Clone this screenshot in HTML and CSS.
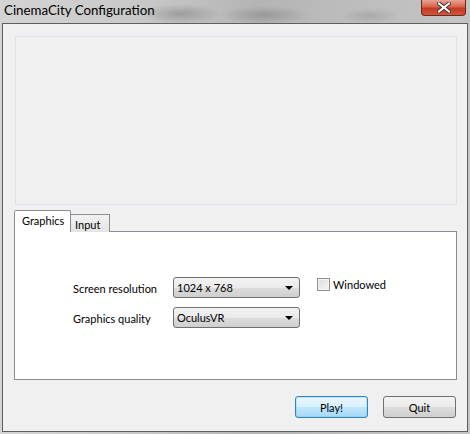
FILE: index.html
```html
<!DOCTYPE html>
<html>
<head>
<meta charset="utf-8">
<link rel="stylesheet" href="styles.css">
</head>
<body>
<div class="window">
  <div class="titlebar">
    <span class="title">CinemaCity Configuration</span>
    <div class="close"><svg width="14" height="11" viewBox="0 0 14 11"><path d="M2 1.5 L12 9.5 M12 1.5 L2 9.5" stroke="#3a3a3a" stroke-width="4" stroke-linecap="square"/><path d="M2 1.5 L12 9.5 M12 1.5 L2 9.5" stroke="#fff" stroke-width="2" stroke-linecap="square"/></svg></div>
  </div>
  <div class="client">
    <div class="picture"></div>
    <div class="tabs">
      <div class="tab active">Graphics</div>
      <div class="tab">Input</div>
    </div>
    <div class="tabpanel">
      <div class="form">
        <div class="row">
          <span class="label">Screen resolution</span>
          <div class="combo"><span>1024 x 768</span><i class="arrow"></i></div>
          <label class="check"><span class="box"></span>Windowed</label>
        </div>
        <div class="row">
          <span class="label">Graphics quality</span>
          <div class="combo"><span>OculusVR</span><i class="arrow"></i></div>
        </div>
      </div>
    </div>
    <div class="buttons">
      <button class="btn default">Play!</button>
      <button class="btn">Quit</button>
    </div>
  </div>
</div>
</body>
</html>
```
FILE: styles.css
```css
html, body { margin: 0; padding: 0; }
body { width: 470px; height: 434px; overflow: hidden; font-family: "Lato", "Open Sans", sans-serif; }
.window {
  width: 470px; height: 434px; box-sizing: border-box;
  background:
    radial-gradient(ellipse 40px 10px at 180px 14px, rgba(90,90,90,0.35), transparent),
    radial-gradient(ellipse 45px 9px at 265px 15px, rgba(90,90,90,0.3), transparent),
    radial-gradient(ellipse 30px 8px at 370px 16px, rgba(110,110,110,0.25), transparent),
    linear-gradient(90deg, #d4d4d4 0%, #c8c8c8 30%, #b4b4b4 55%, #bdbdbd 75%, #c4c4c4 100%);
  display: flex; flex-direction: column;
}
.titlebar { height: 23px; position: relative; display: flex; align-items: flex-start; }
.title { font-size: 13.3px; color: #000; margin: 0 0 0 4px; line-height: 20px; }
.close {
  position: absolute; left: 421px; top: 0; width: 45px; height: 16px; box-sizing: border-box;
  border: 1px solid #6b2a20; border-top: none; border-radius: 0 0 4px 4px;
  background: linear-gradient(#e8a493 0%, #d8644c 45%, #c4391f 55%, #d2563a 100%);
  display: flex; align-items: center; justify-content: center;
}
.client {
  flex: 1; margin: 0 2px 2px 2px; border: 1px solid #5f5f5f; background: #f0f0f0;
  padding: 12px 10px 0 11px; display: flex; flex-direction: column;
}
.picture { height: 167px; border: 1px solid #dbe4ec; background: #f0f0f0; margin-left: 1px; }
.tabs { display: flex; align-items: flex-end; margin-top: 5px; height: 22px; position: relative; z-index: 1; }
.tab {
  font-size: 11px; color: #000; box-sizing: border-box; border: 1px solid #898c95;
  border-bottom: none;
}
.tab.active { background: #fff; height: 22px; width: 57px; padding: 3px 0 0 7px; border-radius: 2px 2px 0 0; }
.tab:not(.active) { height: 18px; width: 39px; padding: 2px 0 0 4px; border-left: none; background: linear-gradient(#f2f2f2, #e4e4e4); line-height: 16px; }
.tabpanel {
  height: 149px; margin-top: -1px; border: 1px solid #898c95; background: #fff; box-sizing: border-box;
}
.form { padding: 45px 0 0 58px; display: flex; flex-direction: column; gap: 9px; }
.row { display: flex; align-items: center; height: 21px; }
.label { width: 100px; font-size: 11px; color: #000; padding-top: 1px; }
.combo {
  width: 127px; height: 21px; box-sizing: border-box; border: 1px solid #707070; border-radius: 3px;
  background: linear-gradient(#f2f2f2 0%, #ebebeb 50%, #dddddd 51%, #cfcfcf 100%);
  display: flex; align-items: center; justify-content: space-between; padding: 0 5px 0 3px;
  font-size: 11px; color: #000;
}
.arrow { width: 0; height: 0; border-left: 4px solid transparent; border-right: 4px solid transparent; border-top: 4px solid #000; margin-right: 1px; }
.check { display: flex; align-items: center; font-size: 11px; margin-left: 17px; align-self: flex-start; margin-top: 1px; color: #000; }
.box { width: 11px; height: 11px; border: 1px solid #8f8f8f; background: linear-gradient(135deg, #dcdcdc, #f6f6f6); margin-right: 3px; box-shadow: inset 0 0 0 1px #f4f4f4; }
.buttons { display: flex; justify-content: flex-end; gap: 15px; margin-top: 16px; padding-right: 1px; }
.btn {
  width: 73px; height: 22px; box-sizing: border-box; font-family: inherit; font-size: 11px; color: #000;
  border: 1px solid #707070; border-radius: 3px; padding: 0;
  background: linear-gradient(#f2f2f2 0%, #ebebeb 50%, #dddddd 51%, #cfcfcf 100%);
}
.btn.default {
  border-color: #3c7fb1;
  background: linear-gradient(#eaf6fd 0%, #d9f0fc 50%, #bee6fd 51%, #a7d9f5 100%);
  box-shadow: inset 0 0 0 1px #48d5fa55;
}
```
